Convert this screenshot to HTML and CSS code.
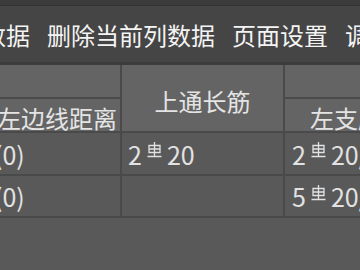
FILE: index.html
```html
<!DOCTYPE html>
<html lang="zh">
<head>
<meta charset="utf-8">
<link rel="stylesheet" href="styles.css">
</head>
<body>
<div class="app">
  <div class="topstrip"></div>
  <div class="toolbar">
    <span class="tool">插入数据</span>
    <span class="tool">删除当前列数据</span>
    <span class="tool">页面设置</span>
    <span class="tool">调整列宽</span>
  </div>
  <div class="grid">
    <div class="cell head c1 r1"></div>
    <div class="cell head c2 span">上通长筋</div>
    <div class="cell head c3 r1"></div>
    <div class="cell head c1 sub">左边线距离</div>
    <div class="cell head c3 sub left">左支座筋</div>

    <div class="cell data c1 first">(0)</div>
    <div class="cell data c2">2<svg class="steel" viewBox="0 0 15 16"><path d="M7.5 0V14M2 3.5H13V10.5H2ZM2 7H13M0.5 14.5H14.5"/></svg>20</div>
    <div class="cell data c3">2<svg class="steel" viewBox="0 0 15 16"><path d="M7.5 0V14M2 3.5H13V10.5H2ZM2 7H13M0.5 14.5H14.5"/></svg>20/2<svg class="steel" viewBox="0 0 15 16"><path d="M7.5 0V14M2 3.5H13V10.5H2ZM2 7H13M0.5 14.5H14.5"/></svg>20</div>

    <div class="cell data c1 first">(0)</div>
    <div class="cell data c2"></div>
    <div class="cell data c3">5<svg class="steel" viewBox="0 0 15 16"><path d="M7.5 0V14M2 3.5H13V10.5H2ZM2 7H13M0.5 14.5H14.5"/></svg>20/3<svg class="steel" viewBox="0 0 15 16"><path d="M7.5 0V14M2 3.5H13V10.5H2ZM2 7H13M0.5 14.5H14.5"/></svg>20</div>
  </div>
</div>
</body>
</html>
```
FILE: styles.css
```css
html, body {
  margin: 0;
  padding: 0;
  background: #595959;
}
.app {
  width: 360px;
  height: 270px;
  overflow: hidden;
  font-family: "Noto Sans CJK SC", "Noto Sans", sans-serif;
  font-size: 24px;
}
.topstrip {
  height: 5px;
  background: #3b3b3b;
  border-bottom: 1px solid #333333;
}
.toolbar {
  height: 56px;
  background: #454545;
  border-bottom: 3px solid #3c3c3c;
  display: flex;
  align-items: center;
  gap: 17px;
  margin-left: -66px;
  white-space: nowrap;
  color: #f4f4f4;
}
.tool {
  flex: none;
}
.grid {
  display: grid;
  grid-template-columns: 126px 161px 240px;
  grid-template-rows: 32px 32px 41px 40px;
  gap: 2px;
  background: #4a4a4a;
  margin-left: -6px;
  width: max-content;
  padding-bottom: 2px;
}
.cell {
  display: flex;
  align-items: center;
  white-space: nowrap;
  overflow: hidden;
}
.head {
  background: #646464;
  color: #e4e4e4;
  justify-content: center;
}
.c1 { grid-column: 1; }
.c2 { grid-column: 2; }
.c3 { grid-column: 3; }
.r1 { grid-row: 1; }
.span {
  grid-row: 1 / span 2;
  padding-top: 4px;
}
.sub {
  grid-row: 2;
  padding-top: 5px;
}
.left {
  justify-content: flex-start;
  padding-left: 25px;
}
.data {
  background: #595959;
  color: #e2e2e2;
  padding-left: 6px;
  font-size: 25px;
}
.first {
  padding-left: 0;
}
.c3.data {
  padding-left: 7px;
}
.steel {
  width: 15px;
  height: 16px;
  margin: 9px 5px 0 5px;
  align-self: flex-start;
  fill: none;
  stroke: #e2e2e2;
  stroke-width: 1.3;
}
```
